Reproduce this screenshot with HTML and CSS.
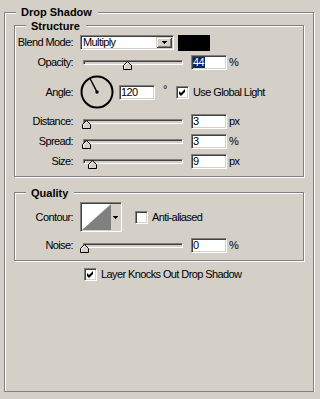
FILE: index.html
```html
<!DOCTYPE html>
<html lang="en">
  <head>
    <meta charset="UTF-8" />
    <meta name="viewport" content="width=device-width, initial-scale=1.0" />
    <title>Drop Shadow</title>
    <link rel="stylesheet" href="styles.css">
  </head>
  <body>
    <section class="panel">
      <h1 class="panel-title">Drop Shadow</h1>

      <fieldset class="group structure">
        <h2 class="group-title">Structure</h2>

        <div class="row blend-row">
          <span class="label">Blend Mode:</span>
          <div class="select">
            <span class="select-value">Multiply</span>
            <span class="select-button">
              <svg width="5" height="3" viewBox="0 0 5 3"><path d="M0 0h5v1h-1v1h-1v1h-1v-1h-1v-1h-1z" /></svg>
            </span>
          </div>
          <span class="swatch"></span>
        </div>

        <div class="row">
          <span class="label">Opacity:</span>
          <div class="slider">
            <span class="thumb" style="left: 39px"></span>
          </div>
          <span class="field"><span class="selected">44</span></span>
          <span class="unit">%</span>
        </div>

        <div class="row angle-row">
          <span class="label">Angle:</span>
          <svg class="dial" width="34" height="34" viewBox="0 0 34 34">
            <circle cx="17" cy="17" r="15.5" fill="none" stroke="#000" stroke-width="2" />
            <line x1="17" y1="17" x2="10" y2="3.5" stroke="#000" stroke-width="1.5" />
            <circle cx="17" cy="17" r="1.7" />
          </svg>
          <span class="field field-angle">120</span>
          <span class="degree">°</span>
          <label class="check">
            <span class="box checked"></span>
            <span>Use Global Light</span>
          </label>
        </div>

        <div class="row">
          <span class="label">Distance:</span>
          <div class="slider">
            <span class="thumb" style="left: -2px"></span>
          </div>
          <span class="field">3</span>
          <span class="unit">px</span>
        </div>

        <div class="row">
          <span class="label">Spread:</span>
          <div class="slider">
            <span class="thumb" style="left: -2px"></span>
          </div>
          <span class="field">3</span>
          <span class="unit">%</span>
        </div>

        <div class="row">
          <span class="label">Size:</span>
          <div class="slider">
            <span class="thumb" style="left: 4px"></span>
          </div>
          <span class="field">9</span>
          <span class="unit">px</span>
        </div>
      </fieldset>

      <fieldset class="group quality">
        <h2 class="group-title">Quality</h2>

        <div class="row contour-row">
          <span class="label">Contour:</span>
          <div class="contour">
            <svg class="contour-preview" width="29" height="26" viewBox="0 0 29 26">
              <rect width="29" height="26" fill="#fff" />
              <polygon points="0,26 29,0 29,26" fill="#808080" />
            </svg>
            <span class="contour-button">
              <svg width="5" height="3" viewBox="0 0 5 3"><path d="M0 0h5v1h-1v1h-1v1h-1v-1h-1v-1h-1z" /></svg>
            </span>
          </div>
          <label class="check anti">
            <span class="box"></span>
            <span>Anti-aliased</span>
          </label>
        </div>

        <div class="row noise-row">
          <span class="label">Noise:</span>
          <div class="slider">
            <span class="thumb" style="left: -4px"></span>
          </div>
          <span class="field">0</span>
          <span class="unit">%</span>
        </div>
      </fieldset>

      <div class="knock">
        <label class="check">
          <span class="box checked"></span>
          <span>Layer Knocks Out Drop Shadow</span>
        </label>
      </div>
    </section>
  </body>
</html>
```

FILE: styles.css
```css
body {
  margin: 0;
  background: #d4d0c8;
  font-family: "Liberation Sans", Arial, sans-serif;
  font-size: 11px;
  line-height: 13px;
  letter-spacing: -0.6px;
  color: #000;
}

/* etched frames: grey line with a white line beside it */
.panel,
.group {
  box-sizing: border-box;
  border: 1px solid #808080;
  box-shadow: 1px 1px 0 #fff, inset 1px 1px 0 #fff;
}

.panel {
  width: 310px;
  height: 380px;
  margin: 12px 0 0 4px;
}

.panel-title,
.group-title {
  width: fit-content;
  margin: -7px 0 0 11px;
  padding: 0 6px 0 5px;
  background: #d4d0c8;
  font-size: 11px;
  font-weight: bold;
  letter-spacing: 0;
}

.group {
  margin: 6px 9px 0;
  padding: 0 0 7px;
  min-width: 0;
}

.group-title {
  margin-top: -6px;
}

.quality {
  margin-top: 15px;
}

.row {
  display: flex;
  align-items: center;
  height: 15px;
  margin-top: 5px;
}

.blend-row,
.contour-row {
  margin-top: 2px;
}

.angle-row {
  height: 34px;
}

.contour-row {
  height: 30px;
}

.noise-row {
  margin-top: 6px;
}

.label {
  flex: none;
  width: 58px;
  text-align: right;
}

/* sunken 2px edge used by fields, boxes and tracks */
.field,
.select,
.box,
.contour {
  box-sizing: border-box;
  border: 1px solid;
  border-color: #808080 #fff #fff #808080;
  box-shadow: inset 1px 1px #404040, inset -1px -1px #d4d0c8;
}

.select {
  display: flex;
  width: 94px;
  height: 15px;
  margin-left: 7px;
  padding: 1px;
  background: #fff;
}

.select-value {
  flex: 1;
  padding-left: 1px;
  line-height: 11px;
}

.select-button,
.contour-button {
  display: flex;
  align-items: center;
  justify-content: center;
  background: #d4d0c8;
}

.select-button {
  width: 16px;
  box-shadow: inset 1px 1px #d4d0c8, inset -1px -1px #404040,
    inset 2px 2px #fff, inset -2px -2px #808080;
}

.swatch {
  width: 32px;
  height: 16px;
  margin-left: 4px;
  background: #000;
}

.slider {
  position: relative;
  box-sizing: border-box;
  width: 100px;
  height: 5px;
  margin-left: 10px;
  border: 1px solid;
  border-color: #808080 #fff #fff #808080;
  box-shadow: inset 1px 1px #404040;
  background: #d4d0c8;
}

.thumb {
  position: absolute;
  top: 0;
  width: 9px;
  height: 9px;
  background: url("data:image/svg+xml;utf8,<svg xmlns='http://www.w3.org/2000/svg' width='9' height='9' viewBox='0 0 9 9'><path d='M0.5 8.5V4.5L4.5 0.5L8.5 4.5V8.5Z' fill='%23d4d0c8' stroke='%23000'/><path d='M1.5 7.5V4.9L4.5 1.9' fill='none' stroke='%23fff'/></svg>");
}

.field {
  display: flex;
  align-items: center;
  width: 36px;
  height: 15px;
  margin-left: 8px;
  padding: 1px 0 1px 1px;
  background: #fff;
}

.field-angle {
  margin-left: 5px;
}

.selected {
  padding: 0 1px 0 0;
  line-height: 11px;
  background: #0a246a;
  color: #fff;
}

.unit {
  margin-left: 2px;
}

.dial {
  flex: none;
  margin-left: 7px;
}

.degree {
  align-self: flex-start;
  width: 13px;
  margin-top: 8px;
  padding-left: 8px;
}

.check {
  display: flex;
  align-items: center;
  gap: 4px;
}

.box {
  display: flex;
  align-items: center;
  justify-content: center;
  width: 13px;
  height: 13px;
  background: #fff;
}

.box.checked {
  background: #fff url("data:image/svg+xml;utf8,<svg xmlns='http://www.w3.org/2000/svg' width='7' height='7' viewBox='0 0 7 7'><path d='M0 2L2 4L6 0V3L2 7L0 5Z'/></svg>") no-repeat 2px 2px;
}

.contour {
  display: flex;
  width: 42px;
  height: 30px;
  margin-left: 7px;
  padding: 1px;
  background: #d4d0c8;
}

.contour-preview {
  display: block;
}

.contour-button {
  flex: 1;
}

.anti {
  margin-left: 13px;
}

.knock {
  display: flex;
  height: 13px;
  margin-top: 7px;
  padding-left: 79px;
}
```
